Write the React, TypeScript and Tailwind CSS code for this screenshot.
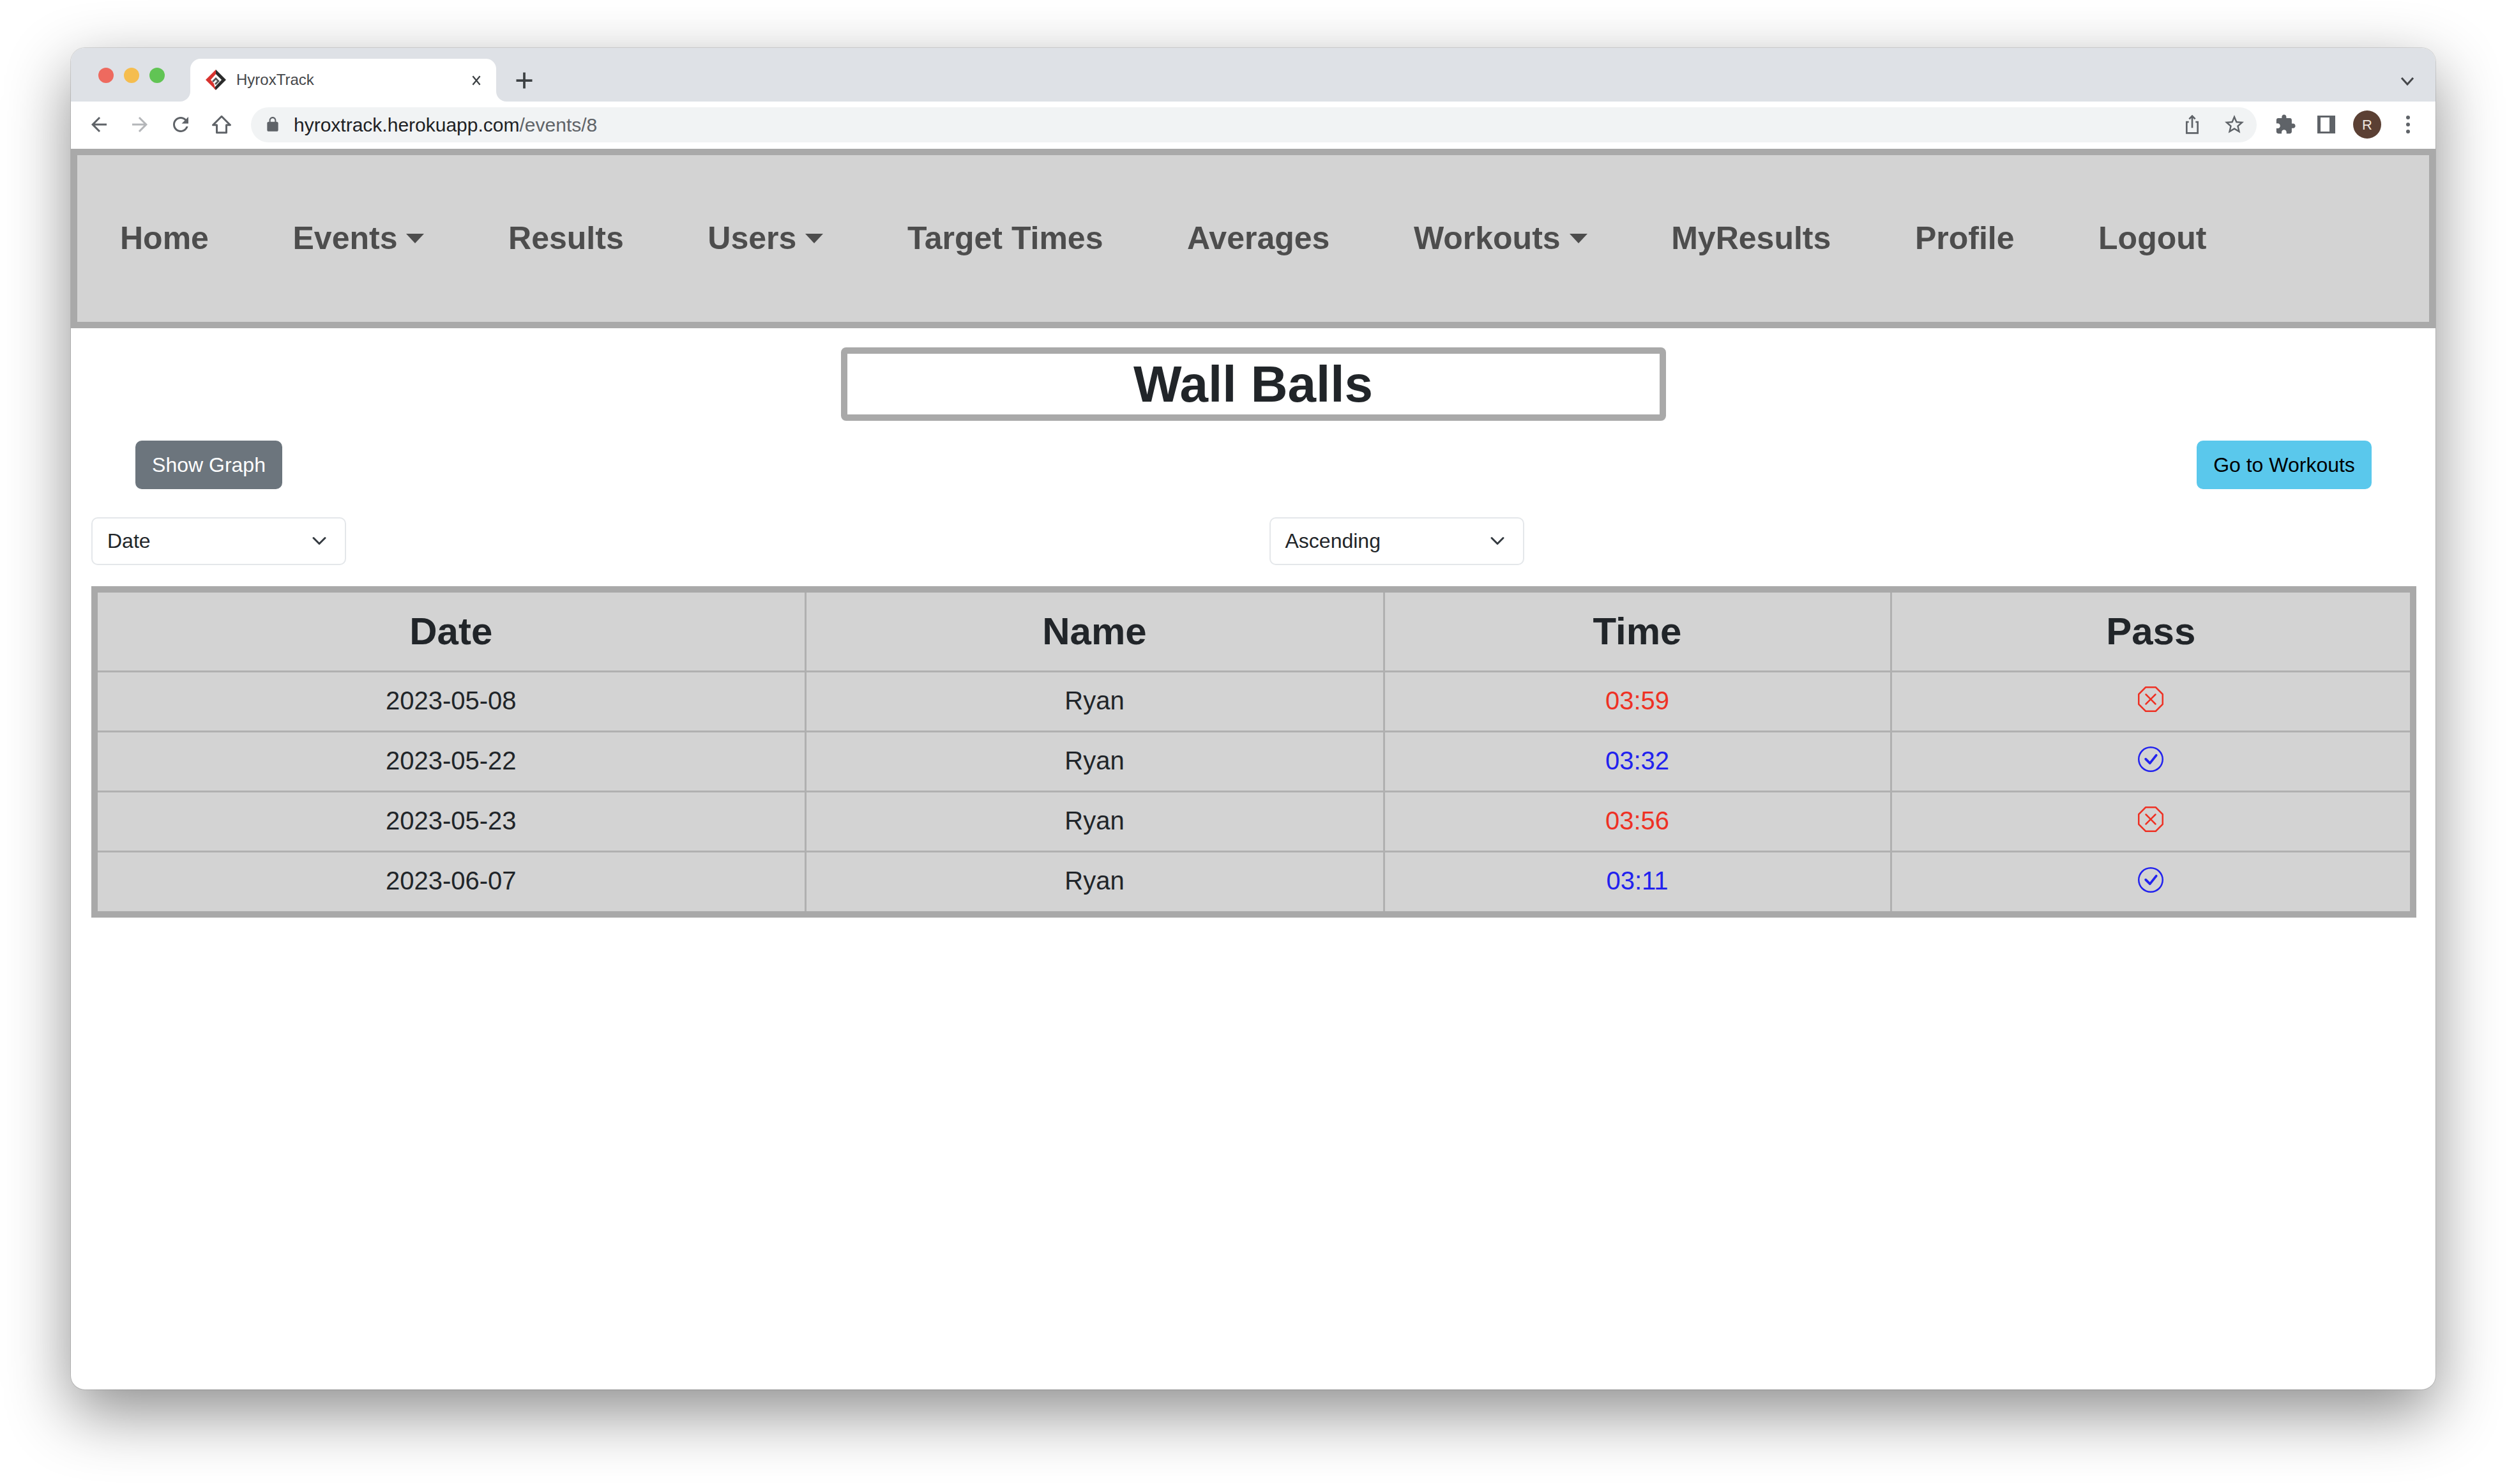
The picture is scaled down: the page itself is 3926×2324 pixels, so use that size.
import { BsCheckCircle, BsXOctagon } from "react-icons/bs";

const navItems = [
  { label: "Home" },
  { label: "Events", caret: true },
  { label: "Results" },
  { label: "Users", caret: true },
  { label: "Target Times" },
  { label: "Averages" },
  { label: "Workouts", caret: true },
  { label: "MyResults" },
  { label: "Profile" },
  { label: "Logout" },
];

const rows = [
  { date: "2023-05-08", name: "Ryan", time: "03:59", pass: false },
  { date: "2023-05-22", name: "Ryan", time: "03:32", pass: true },
  { date: "2023-05-23", name: "Ryan", time: "03:56", pass: false },
  { date: "2023-06-07", name: "Ryan", time: "03:11", pass: true },
];

function Glyph({ d, className }: { d: string; className: string }) {
  return (
    <svg viewBox="0 0 24 24" className={className} fill="currentColor">
      <path d={d} />
    </svg>
  );
}

function ToolButton({ children }: { children: React.ReactNode }) {
  return <div className="flex h-[64px] w-[64px] items-center justify-center text-[#5f6368]">{children}</div>;
}

function Favicon() {
  return (
    <svg viewBox="0 0 32 32" className="h-[32px] w-[32px]">
      <path d="M16 0 L32 16 L16 32 L13 29 L25 16 L16 7 Z" fill="#2b2b2b" />
      <path d="M16 0 L0 16 L16 32 L13 22 L8 16 L16 7 Z" fill="#d8332f" />
      <path d="M16 12 L22 18 L16 24 L14 22 L18 18 L16 16 L12 20 L10 18 Z" fill="#555" />
    </svg>
  );
}

function TitleBar() {
  return (
    <div className="relative flex h-[84px] items-end bg-[#dee1e6] pl-[187px]">
      <div className="absolute left-[43px] top-[31px] flex gap-[16px]">
        <span className="h-[24px] w-[24px] rounded-full bg-[#ee6a5f]" />
        <span className="h-[24px] w-[24px] rounded-full bg-[#f5bd4f]" />
        <span className="h-[24px] w-[24px] rounded-full bg-[#61c454]" />
      </div>
      <div className="relative flex h-[67px] w-[479px] items-center rounded-t-[16px] bg-white pb-[2px] pl-[24px]">
        <Favicon />
        <span className="ml-[16px] text-[24px] text-[#45474a]">HyroxTrack</span>
        <svg viewBox="0 0 16 16" className="absolute left-[439px] top-[25px] h-[18px] w-[18px] text-[#3c4043]" fill="none" stroke="currentColor" strokeWidth="2">
          <path d="M3 2 L13 14 M13 2 L3 14" />
        </svg>
        <svg viewBox="0 0 16 16" className="absolute -left-[16px] bottom-0 h-[16px] w-[16px]">
          <path d="M16 0 V16 H0 A16 16 0 0 0 16 0 Z" fill="#fff" />
        </svg>
        <svg viewBox="0 0 16 16" className="absolute -right-[16px] bottom-0 h-[16px] w-[16px]">
          <path d="M0 0 V16 H16 A16 16 0 0 1 0 0 Z" fill="#fff" />
        </svg>
      </div>
      <svg viewBox="0 0 24 24" className="mb-[18px] ml-[29px] h-[30px] w-[30px] text-[#3c4043]" fill="none" stroke="currentColor" strokeWidth="3">
        <path d="M12 2 V22 M2 12 H22" />
      </svg>
      <svg viewBox="0 0 24 24" className="absolute right-[32px] top-[40px] h-[24px] w-[24px] text-[#45474a]" fill="none" stroke="currentColor" strokeWidth="3">
        <path d="M3 7 L12 17 L21 7" />
      </svg>
    </div>
  );
}

function Toolbar() {
  return (
    <div className="flex h-[74px] items-center bg-white pb-[2px] pl-[12px] pr-[11px]">
      <ToolButton>
        <Glyph className="h-[36px] w-[36px]" d="M20 11H7.83l5.59-5.59L12 4l-8 8 8 8 1.41-1.41L7.83 13H20v-2z" />
      </ToolButton>
      <ToolButton>
        <Glyph className="h-[36px] w-[36px] text-[#b4b6b9]" d="M12 4l-1.41 1.41L16.17 11H4v2h12.17l-5.58 5.59L12 20l8-8z" />
      </ToolButton>
      <ToolButton>
        <Glyph className="h-[36px] w-[36px]" d="M17.65 6.35C16.2 4.9 14.21 4 12 4c-4.42 0-7.99 3.58-7.99 8s3.57 8 7.99 8c3.73 0 6.84-2.55 7.73-6h-2.08c-.82 2.33-3.04 4-5.65 4-3.31 0-6-2.69-6-6s2.69-6 6-6c1.66 0 3.14.69 4.22 1.78L13 11h7V4l-2.35 2.35z" />
      </ToolButton>
      <ToolButton>
        <svg viewBox="0 0 24 24" className="h-[36px] w-[36px]" fill="none" stroke="currentColor" strokeWidth="2">
          <path d="M12 3.5 L21 12.5 H17 V20.5 H7 V12.5 H3 Z" strokeLinejoin="round" />
        </svg>
      </ToolButton>
      <div className="ml-[14px] mr-[13px] flex h-[55px] flex-1 items-center rounded-full bg-[#f1f3f4] pl-[21px] pr-[17px] text-[#5f6368]">
        <Glyph
          className="h-[26px] w-[26px]"
          d="M18 8h-1V6c0-2.76-2.24-5-5-5S7 3.24 7 6v2H6c-1.1 0-2 .9-2 2v10c0 1.1.9 2 2 2h12c1.1 0 2-.9 2-2V10c0-1.1-.9-2-2-2zm-2.9 0H8.9V6c0-1.71 1.39-3.1 3.1-3.1 1.71 0 3.1 1.39 3.1 3.1v2z"
        />
        <span className="ml-[20px] flex-1 text-[30px] text-[#202124]">
          hyroxtrack.herokuapp.com<span className="text-[#5f6368]">/events/8</span>
        </span>
        <svg viewBox="0 0 24 24" className="mr-[32px] h-[36px] w-[32px]" fill="none" stroke="currentColor" strokeWidth="2">
          <path d="M8 9 H5.5 V22 H18.5 V9 H16 M12 16 V2 M8.5 5.5 L12 2 L15.5 5.5" />
        </svg>
        <Glyph
          className="h-[36px] w-[36px]"
          d="M22 9.24l-7.19-.62L12 2 9.19 8.63 2 9.24l5.46 4.73L5.82 21 12 17.27 18.18 21l-1.63-7.03L22 9.24zM12 15.4l-3.76 2.27 1-4.28-3.32-2.88 4.38-.38L12 6.1l1.71 4.04 4.38.38-3.32 2.88 1 4.28L12 15.4z"
        />
      </div>
      <ToolButton>
        <Glyph
          className="h-[34px] w-[34px]"
          d="M20.5 11H19V7c0-1.1-.9-2-2-2h-4V3.5C13 2.12 11.88 1 10.5 1S8 2.12 8 3.5V5H4c-1.1 0-1.99.9-1.99 2v3.8H3.5c1.49 0 2.7 1.21 2.7 2.7s-1.21 2.7-2.7 2.7H2V20c0 1.1.9 2 2 2h3.8v-1.5c0-1.49 1.21-2.7 2.7-2.7 1.49 0 2.7 1.21 2.7 2.7V22H17c1.1 0 2-.9 2-2v-4h1.5c1.38 0 2.5-1.12 2.5-2.5S21.88 11 20.5 11z"
        />
      </ToolButton>
      <ToolButton>
        <div className="h-[28px] w-[28px] border-y-[3px] border-l-[5px] border-r-[9px] border-[#5f6368]" />
      </ToolButton>
      <ToolButton>
        <div className="flex h-[44px] w-[44px] items-center justify-center rounded-full bg-[#5b4034] text-[22px] text-[#eee5df]">R</div>
      </ToolButton>
      <ToolButton>
        <div className="flex flex-col gap-[5px]">
          <span className="h-[6px] w-[6px] rounded-full bg-[#5f6368]" />
          <span className="h-[6px] w-[6px] rounded-full bg-[#5f6368]" />
          <span className="h-[6px] w-[6px] rounded-full bg-[#5f6368]" />
        </div>
      </ToolButton>
    </div>
  );
}

function Select({ label }: { label: string }) {
  return (
    <div className="flex h-[75px] w-[399px] items-center justify-between rounded-[10px] border-2 border-[#e4e7ea] pb-[1px] pl-[23px] pr-[28px] text-[32px] text-[#212529]">
      <span>{label}</span>
      <svg viewBox="0 0 16 16" className="h-[24px] w-[24px] text-[#343a40]" fill="none" stroke="currentColor" strokeWidth="2" strokeLinecap="round" strokeLinejoin="round">
        <path d="M2 5 L8 11 L14 5" />
      </svg>
    </div>
  );
}

export default function App() {
  return (
    <div className="h-[2324px] w-[3926px] bg-white pl-[111px] pt-[75px] font-['Liberation_Sans',Arial,sans-serif]">
      <div className="h-[2101px] w-[3703px] overflow-hidden rounded-[22px] bg-white shadow-[0_0_0_1px_rgba(0,0,0,0.12),0_36px_100px_rgba(0,0,0,0.45)]">
        <TitleBar />
        <Toolbar />

        <nav className="flex h-[281px] items-center gap-[131.6px] border-[10px] border-[#a9a9a9] bg-[#d3d3d3] pl-[67px] text-[50px] font-bold text-[#4d4d4d]">
          {navItems.map((item) => (
            <span key={item.label} className="flex items-center">
              {item.label}
              {item.caret && (
                <span className="ml-[14px] h-0 w-0 border-x-[14px] border-t-[15px] border-x-transparent border-t-[#4d4d4d]" />
              )}
            </span>
          ))}
        </nav>

        <main>
          <h1 className="mx-auto mt-[30px] flex h-[115px] w-[1292px] items-center justify-center rounded-[8px] border-[10px] border-[#a9a9a9] text-[80px] font-bold text-[#212529]">
            Wall Balls
          </h1>

          <div className="mt-[31px] flex justify-between pl-[101px] pr-[100px] text-[32px]">
            <button className="h-[76px] w-[230px] rounded-[10px] bg-[#6c757d] pb-[1px] text-white">Show Graph</button>
            <button className="h-[76px] w-[274px] rounded-[10px] bg-[#5ac8ec] pb-[1px] text-black">Go to Workouts</button>
          </div>

          <div className="ml-[32px] mr-[30px] mt-[44px] grid grid-cols-2">
            <Select label="Date" />
            <div className="pl-[24px]">
              <Select label="Ascending" />
            </div>
          </div>

          <div className="ml-[32px] mr-[30px] mt-[33px] border-[10px] border-[#a9a9a9] bg-[#d3d3d3]">
            <table className="w-full table-fixed border-collapse text-center text-[40px] text-[#212529]">
              <colgroup>
                <col className="w-[1108px]" />
                <col className="w-[906px]" />
                <col className="w-[794px]" />
                <col />
              </colgroup>
              <thead>
                <tr className="h-[123px] border-b-[3px] border-[#b0b0b0] text-[60px]">
                  <th className="border-r-[3px] border-[#b0b0b0]">Date</th>
                  <th className="border-r-[3px] border-[#b0b0b0]">Name</th>
                  <th className="border-r-[3px] border-[#b0b0b0]">Time</th>
                  <th>Pass</th>
                </tr>
              </thead>
              <tbody>
                {rows.map((row, i) => (
                  <tr key={row.date} className={i < 3 ? "h-[94px] border-b-[3px] border-[#b0b0b0]" : "h-[94px]"}>
                    <td className="border-r-[3px] border-[#b0b0b0] pb-[3px]">{row.date}</td>
                    <td className="border-r-[3px] border-[#b0b0b0] pb-[3px]">{row.name}</td>
                    <td className={row.pass ? "border-r-[3px] border-[#b0b0b0] pb-[3px] text-[#2222ee]" : "border-r-[3px] border-[#b0b0b0] pb-[3px] text-[#ee3124]"}>
                      {row.time}
                    </td>
                    <td className="pb-[6px]">
                      <div className="flex justify-center">
                        {row.pass ? (
                          <BsCheckCircle className="h-[40px] w-[40px] text-[#2222ee]" />
                        ) : (
                          <BsXOctagon className="h-[40px] w-[40px] text-[#ee3124]" />
                        )}
                      </div>
                    </td>
                  </tr>
                ))}
              </tbody>
            </table>
          </div>
        </main>
      </div>
    </div>
  );
}
